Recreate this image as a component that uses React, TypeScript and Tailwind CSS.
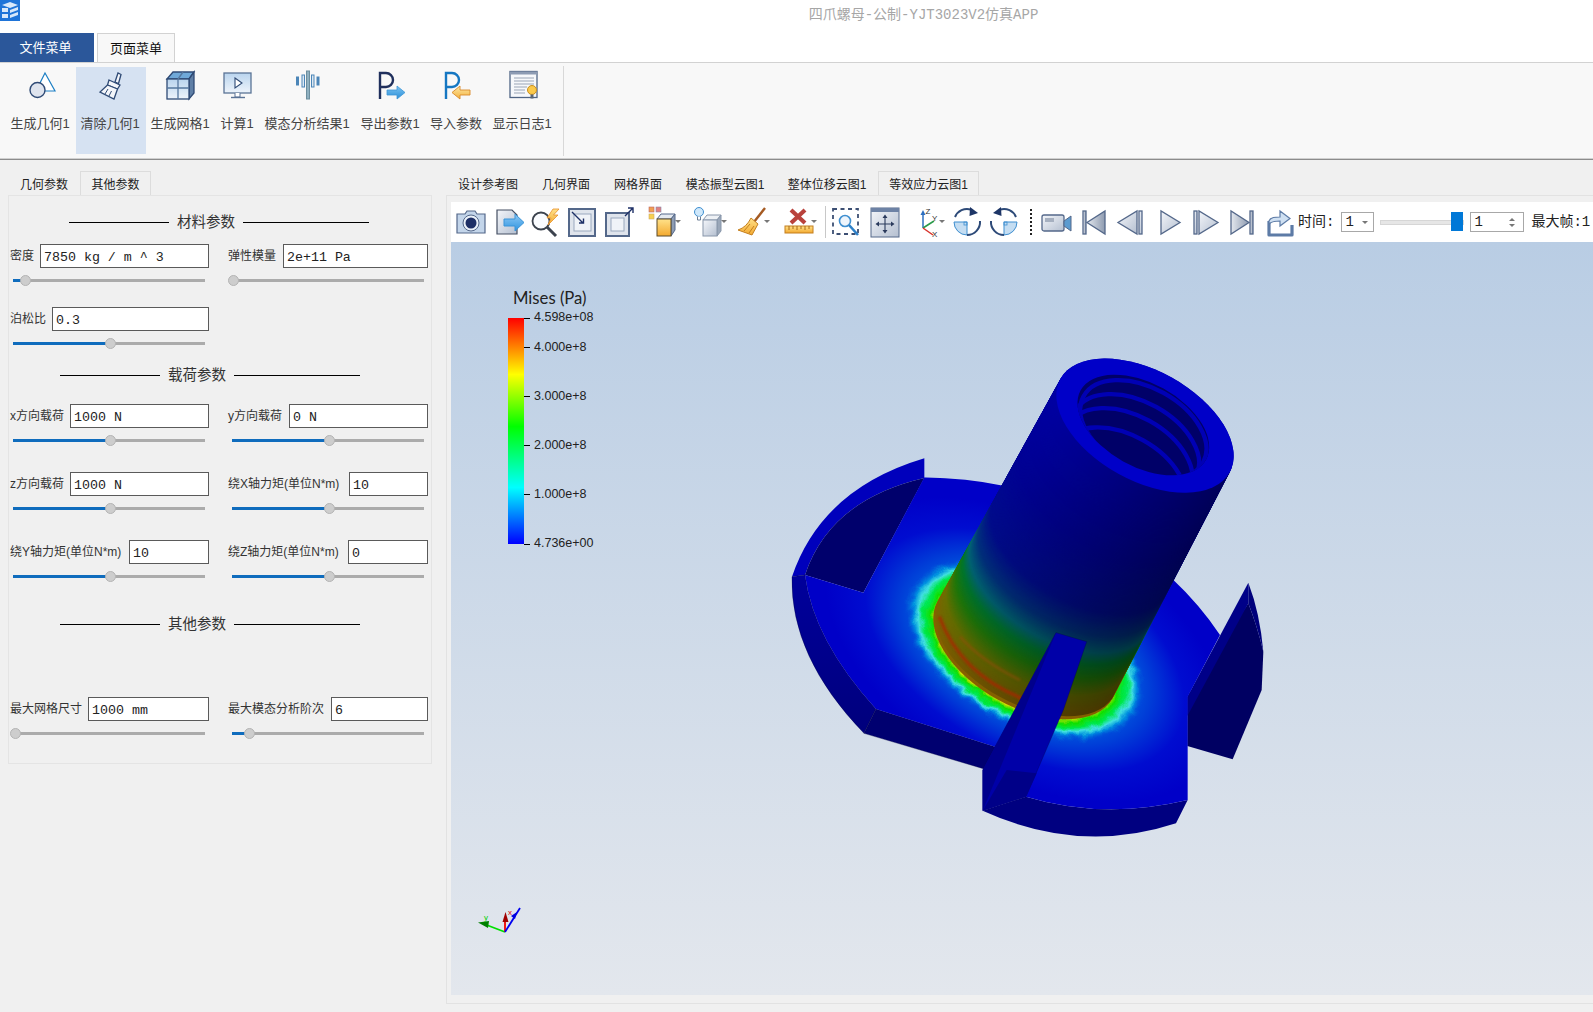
import React from 'react';

const ribbonItems = [
  { label: '生成几何1', w: 'w-[70px]', icon: 'shape' },
  { label: '清除几何1', w: 'w-[70px]', icon: 'brush', active: true },
  { label: '生成网格1', w: 'w-[70px]', icon: 'mesh' },
  { label: '计算1', w: 'w-[44px]', icon: 'monitor' },
  { label: '模态分析结果1', w: 'w-[96px]', icon: 'bars' },
  { label: '导出参数1', w: 'w-[70px]', icon: 'pout' },
  { label: '导入参数', w: 'w-[62px]', icon: 'pin' },
  { label: '显示日志1', w: 'w-[70px]', icon: 'log' },
];

const RibbonIcon = ({ name }: { name: string }) => {
  const navy = '#2f4a75';
  return (
    <svg width="36" height="32" viewBox="0 0 36 32" fill="none">
      <defs>
        <linearGradient id="rb" x1="0" y1="0" x2="0" y2="1">
          <stop offset="0" stopColor="#b9d4ee" />
          <stop offset="1" stopColor="#eef4fb" />
        </linearGradient>
        <linearGradient id="arrowBlue" x1="0" y1="0" x2="0" y2="1">
          <stop offset="0" stopColor="#7cc4f2" />
          <stop offset="1" stopColor="#2b8fd8" />
        </linearGradient>
        <linearGradient id="arrowOrange" x1="0" y1="0" x2="0" y2="1">
          <stop offset="0" stopColor="#fde8a8" />
          <stop offset="1" stopColor="#f3b13c" />
        </linearGradient>
      </defs>
      {name === 'shape' && (
        <>
          <path d="M22 3 L32 21 L13 21 Z" stroke="#1d7fc4" strokeWidth="1.2" fill="#fff" />
          <circle cx="14.5" cy="20" r="7.5" fill="#dfe4ee" stroke={navy} strokeWidth="1.4" />
        </>
      )}
      {name === 'brush' && (
        <g stroke={navy} strokeWidth="1.3" fill="#f4f6fa">
          <path d="M22 12 L25 3 L28 4.5 L25.5 13.5 Z" />
          <path d="M16 10 L27 15 L24.5 19 L14.5 15 Z" />
          <path d="M14.5 15 L24.5 19 L21 29 L7 22 Z" />
          <path d="M12 24 L15 19 M16 26 L18.5 21" strokeWidth="1" />
        </g>
      )}
      {name === 'mesh' && (
        <g stroke={navy} strokeWidth="1.3">
          <path d="M4 9 L10 2 L31 2 L26 9 Z" fill="#6fa8d8" />
          <path d="M26 9 L31 2 L31 23 L26 29 Z" fill="#5f7fa6" />
          <rect x="4" y="9" width="22" height="20" fill="url(#rb)" />
          <path d="M15 9 V29 M4 18 H26 M20 2 L15 9" stroke="#56789f" />
        </g>
      )}
      {name === 'monitor' && (
        <g>
          <rect x="4" y="3" width="27" height="20" fill="url(#rb)" stroke="#5a7396" strokeWidth="1.3" />
          <path d="M15 8 L22 13 L15 18 Z" fill="#fff" stroke={navy} strokeWidth="1.1" />
          <path d="M15 23 V27 H20 V23" fill="#fff" stroke="#5a7396" />
          <path d="M11 27.5 H25" stroke="#5a7396" strokeWidth="1.4" />
        </g>
      )}
      {name === 'bars' && (
        <g stroke="#4c86b8" strokeWidth="1">
          <rect x="16.5" y="1" width="3" height="28" fill="#8fb0c0" stroke="#6d8e9e" />
          <rect x="12" y="5" width="2.5" height="12" fill="#dce8f2" />
          <rect x="21.5" y="5" width="2.5" height="12" fill="#dce8f2" />
          <rect x="6.5" y="7" width="2" height="8" fill="#4c86b8" />
          <rect x="27" y="7" width="2" height="8" fill="#4c86b8" />
        </g>
      )}
      {name === 'pout' && (
        <g>
          <path d="M7 29 V3 H13 A7 7 0 0 1 13 17 H8" stroke="#1f2f5c" strokeWidth="2.4" />
          <path d="M14 20 H24 V16 L32 22.5 L24 29 V25 H14 Z" fill="url(#arrowBlue)" stroke="#3d96d6" strokeWidth=".8" />
        </g>
      )}
      {name === 'pin' && (
        <g>
          <path d="M7 29 V3 H13 A7 7 0 0 1 13 17 H8" stroke="#1577c2" strokeWidth="2.4" />
          <path d="M31 20 H21 V16 L13 22.5 L21 29 V25 H31 Z" fill="url(#arrowOrange)" stroke="#d98a2b" strokeWidth=".9" />
        </g>
      )}
      {name === 'log' && (
        <g>
          <rect x="5" y="1.5" width="27" height="26" fill="#f6f8fb" stroke="#4f6484" strokeWidth="1.3" />
          <rect x="5" y="1.5" width="27" height="3" fill="#8d9cb4" />
          <path d="M9 8 H29 M9 11 H29 M9 14 H29 M9 17 H22 M9 20 H20 M9 23 H20" stroke="#9aa5b6" />
          <circle cx="27" cy="20" r="4.5" fill="#fbc94a" stroke="#c98f1e" />
          <rect x="25.5" y="24.5" width="3" height="4" fill="#5c6675" />
        </g>
      )}
    </svg>
  );
};

const Ribbon = () => (
  <div className="flex h-[96px] items-start border-t border-[#d2d2d2] bg-[#f8f8f8] pl-[6px] pt-[4px]">
    {ribbonItems.map((item) => (
      <div
        key={item.label}
        className={`flex h-[87px] flex-col items-center pt-[3px] ${item.w} ${item.active ? 'bg-[#d6e2f2]' : ''}`}
      >
        <RibbonIcon name={item.icon} />
        <span className="mr-[2px] mt-[14px] whitespace-nowrap text-[13px] leading-[16px] text-[#444]">{item.label}</span>
      </div>
    ))}
    <div className="ml-[5px] mt-[-1px] h-[90px] w-px bg-[#d8d8d8]" />
  </div>
);

type Param = { label: string; value: string; w: string; pos: number };

const Slider = ({ pos, col }: { pos: number; col: number }) => (
  <div className={`relative flex h-6 w-[192px] items-center ${col === 0 ? 'ml-[3px]' : 'ml-[4px]'}`}>
    <div className="h-[3px] w-full bg-[#ababab]">
      <div className="h-full bg-[#0f6cbd]" style={{ width: pos }} />
    </div>
    <div
      className="absolute top-[6.5px] size-[11px] rounded-full border border-[#b4b4b4] bg-[#cdcdcd]"
      style={{ left: pos - 5.5 }}
    />
  </div>
);

const ParamCell = ({ p, col }: { p: Param; col: number }) => (
  <div>
    <div className="flex h-6 items-center justify-between">
      <span className="-mt-[1px] whitespace-nowrap text-[12px] text-[#333]">{p.label}</span>
      <div
        className={`flex h-6 items-center border border-[#5a5a5a] bg-white pl-[3px] pt-[3px] font-['Liberation_Mono','Noto_Sans_CJK_SC',monospace] text-[13.3px] text-[#222] ${p.w}`}
      >
        {p.value}
      </div>
    </div>
    <Slider pos={p.pos} col={col} />
  </div>
);

const ParamRow = ({ left, right, className }: { left: Param; right?: Param; className: string }) => (
  <div className={`grid grid-cols-[199px_200px] gap-x-[19px] ${className}`}>
    <ParamCell p={left} col={0} />
    {right && <ParamCell p={right} col={1} />}
  </div>
);

const Heading = ({ title, className }: { title: string; className: string }) => (
  <div className={`flex h-5 items-center gap-2 ${className}`}>
    <div className="h-px w-[100px] bg-black" />
    <span className="w-[58px] whitespace-nowrap text-[14.5px] leading-5 text-[#333]">{title}</span>
    <div className="h-px w-[126px] bg-black" />
  </div>
);

const LeftPanel = () => (
  <div className="flex w-[446px] shrink-0 flex-col pl-2 pt-[11px]">
    <div className="flex h-6 text-[12px] text-[#222]">
      <div className="flex w-[72px] items-center justify-center pt-[3px]">几何参数</div>
      <div className="flex w-[71px] items-center justify-center border border-b-0 border-[#dcdcdc] pt-[3px]">其他参数</div>
    </div>
    <div className="h-[569px] w-[424px] border border-[#e4e4e4] pl-px pt-4">
      <Heading title="材料参数" className="ml-[59px]" />
      <ParamRow
        className="mt-3"
        left={{ label: '密度', value: '7850 kg / m ^ 3', w: 'w-[169px]', pos: 12 }}
        right={{ label: '弹性模量', value: '2e+11 Pa', w: 'w-[145px]', pos: 1 }}
      />
      <ParamRow className="mt-[15px]" left={{ label: '泊松比', value: '0.3', w: 'w-[157px]', pos: 97 }} />
      <Heading title="载荷参数" className="ml-[50px] mt-[10px]" />
      <ParamRow
        className="mt-[19px]"
        left={{ label: 'x方向载荷', value: '1000 N', w: 'w-[139px]', pos: 97 }}
        right={{ label: 'y方向载荷', value: '0 N', w: 'w-[139px]', pos: 97 }}
      />
      <ParamRow
        className="mt-5"
        left={{ label: 'z方向载荷', value: '1000 N', w: 'w-[139px]', pos: 97 }}
        right={{ label: '绕X轴力矩(单位N*m)', value: '10', w: 'w-[79px]', pos: 97 }}
      />
      <ParamRow
        className="mt-5"
        left={{ label: '绕Y轴力矩(单位N*m)', value: '10', w: 'w-[80px]', pos: 97 }}
        right={{ label: '绕Z轴力矩(单位N*m)', value: '0', w: 'w-[80px]', pos: 97 }}
      />
      <Heading title="其他参数" className="ml-[50px] mt-[26px]" />
      <ParamRow
        className="mt-[63px]"
        left={{ label: '最大网格尺寸', value: '1000 mm', w: 'w-[121px]', pos: 2 }}
        right={{ label: '最大模态分析阶次', value: '6', w: 'w-[97px]', pos: 17 }}
      />
    </div>
  </div>
);

const Defs = () => (
  <svg width="0" height="0" className="absolute">
    <defs>
      <linearGradient id="tbBlue" x1="0" y1="0" x2="0" y2="1">
        <stop offset="0" stopColor="#8dc8f5" />
        <stop offset="1" stopColor="#2f95e0" />
      </linearGradient>
      <linearGradient id="tbGray" x1="0" y1="0" x2="1" y2="1">
        <stop offset="0" stopColor="#f4f6fa" />
        <stop offset="1" stopColor="#b4bfd0" />
      </linearGradient>
      <linearGradient id="tbDark" x1="0" y1="0" x2="1" y2="0">
        <stop offset="0" stopColor="#e4e8ee" />
        <stop offset="1" stopColor="#8e9bb0" />
      </linearGradient>
      <linearGradient id="tbOrange" x1="0" y1="0" x2="0" y2="1">
        <stop offset="0" stopColor="#ffe28a" />
        <stop offset="1" stopColor="#f3a92f" />
      </linearGradient>
    </defs>
  </svg>
);

const edge = '#54688a';

const ToolIcon = ({ name }: { name: string }) => (
  <svg width="32" height="32" viewBox="0 0 32 32" fill="none">
    {name === 'camera' && (
      <g>
        <path d="M2 8 H10 L12 5 H20 L22 8 H30 V27 H2 Z" fill="#c3d5ea" stroke={edge} strokeWidth="1.2" />
        <circle cx="16" cy="17" r="8" fill="#eaf1f9" stroke={edge} />
        <circle cx="16" cy="17" r="5.5" fill="#1d2f66" />
      </g>
    )}
    {name === 'export' && (
      <g>
        <path d="M4 4 H19 L24 9 V28 H4 Z" fill="url(#tbGray)" stroke="#444f63" strokeWidth="1.2" />
        <path d="M11 13 H22 V8 L31 16.5 L22 25 V20 H11 Z" fill="url(#tbBlue)" stroke="#3a94d8" />
      </g>
    )}
    {name === 'spark' && (
      <g>
        <circle cx="12" cy="15" r="8.5" fill="#fafcff" stroke="#3c434e" strokeWidth="1.8" />
        <path d="M18 21 L27 30" stroke="#3c434e" strokeWidth="3" />
        <path d="M24 3 L18 12 L22 12 L19 19 L29 9 L24.5 9 L30 3 Z" fill="url(#tbOrange)" stroke="#e8912a" strokeWidth=".8" />
      </g>
    )}
    {name === 'boxin' && (
      <g>
        <rect x="3" y="3" width="26" height="27" fill="#dfe4ec" stroke={edge} strokeWidth="2" />
        <rect x="8" y="8" width="17" height="17" fill="#f0f3f8" stroke="#9aa8bd" />
        <path d="M6 6 L17 17 M13 17 H17.5 V12.5" stroke="#1d2f66" strokeWidth="1.4" />
      </g>
    )}
    {name === 'boxout' && (
      <g>
        <rect x="3" y="7" width="23" height="23" fill="#dfe4ec" stroke={edge} strokeWidth="2" />
        <rect x="8" y="12" width="13" height="13" fill="#f0f3f8" stroke="#9aa8bd" />
        <path d="M22 10 L30 2 M25 2 H30 V7" stroke="#1d2f66" strokeWidth="1.4" />
      </g>
    )}
    {name === 'cube' && (
      <g>
        <rect x="2" y="1" width="5" height="5" fill="#f0a050" stroke="#b66" strokeWidth=".6" />
        <rect x="9" y="1" width="5" height="5" fill="#e08080" stroke="#88a" strokeWidth=".6" />
        <rect x="2" y="8" width="5" height="5" fill="#f7d050" stroke="#ca6" strokeWidth=".6" />
        <path d="M10 13 L14 8 H28 L24 13 Z" fill="#e4e9f0" stroke={edge} />
        <path d="M24 13 L28 8 V24 L24 30 Z" fill="#8d9cb3" stroke={edge} />
        <rect x="10" y="13" width="14" height="17" fill="url(#tbOrange)" stroke="#5a4a2a" />
      </g>
    )}
    {name === 'bulb' && (
      <g>
        <circle cx="6" cy="6" r="4.5" fill="#cfe8fb" stroke="#3f8fd0" />
        <path d="M4.5 10.5 V14 H7.5 V10.5" fill="#fff" stroke="#6a7c94" />
        <path d="M10 14 L14 9 H28 L24 14 Z" fill="#eef1f5" stroke="#8896aa" />
        <path d="M24 14 L28 9 V25 L24 30 Z" fill="#9aa7b9" stroke="#8896aa" />
        <rect x="10" y="14" width="14" height="16" fill="url(#tbGray)" stroke="#8896aa" />
      </g>
    )}
    {name === 'broom' && (
      <g>
        <path d="M29 2 L18 16" stroke="#a55a22" strokeWidth="2.4" />
        <path d="M15 12 L22 18 L16 29 L2 24 C8 22 12 18 15 12 Z" fill="url(#tbOrange)" stroke="#c47f1f" />
        <path d="M14 18 L8 25 M18 20 L13 27" stroke="#c47f1f" />
      </g>
    )}
    {name === 'ruler' && (
      <g>
        <path d="M8 4 L22 17 M22 4 L8 17" stroke="#b9423c" strokeWidth="4.2" />
        <rect x="2" y="20" width="28" height="7" fill="url(#tbOrange)" stroke="#c47f1f" />
        <path d="M6 20 V24 M10 20 V23 M14 20 V24 M18 20 V23 M22 20 V24 M26 20 V23" stroke="#a86b18" />
      </g>
    )}
    {name === 'zoombox' && (
      <g>
        <rect x="3" y="3" width="25" height="25" stroke="#3c4f73" strokeWidth="1.8" strokeDasharray="4 3.5" />
        <circle cx="15" cy="15" r="5.5" fill="#eef5fc" stroke="#3f8fd0" strokeWidth="1.6" />
        <path d="M19 19 L28 29" stroke="#2d80c8" strokeWidth="2.6" />
      </g>
    )}
    {name === 'fit' && (
      <g>
        <rect x="3" y="2" width="28" height="29" fill="url(#tbGray)" stroke={edge} />
        <rect x="3" y="2" width="28" height="4" fill="#6d82a5" />
        <path d="M17 10 V26 M9 18 H25" stroke="#2a3a5c" strokeWidth="1.1" />
        <path d="M17 8.5 L14.5 12 H19.5 Z M17 27.5 L14.5 24 H19.5 Z M7.5 18 L11 15.5 V20.5 Z M26.5 18 L23 15.5 V20.5 Z" fill="#2a3a5c" />
      </g>
    )}
    {name === 'axes' && (
      <g>
        <path d="M12 22 V6" stroke="#2d6fc0" strokeWidth="1.5" />
        <path d="M12 4 L9.5 9 H14.5 Z" fill="#2d6fc0" />
        <path d="M12 22 L23 15" stroke="#2a9a4a" strokeWidth="1.5" />
        <path d="M12 22 L22 29" stroke="#d8332c" strokeWidth="1.5" />
        <text x="14.5" y="8" fontSize="8" fill="#333" fontFamily="Liberation Sans">Z</text>
        <text x="21" y="15" fontSize="8" fill="#333" fontFamily="Liberation Sans">Y</text>
        <text x="21" y="31" fontSize="8" fill="#333" fontFamily="Liberation Sans">X</text>
      </g>
    )}
    {name === 'rotcw' && (
      <g>
        <path d="M3 16 H16 V29 A13 13 0 0 1 3 16 Z" fill="#c4ddf2" stroke="#3f8fd0" />
        <path d="M4 11 A13 13 0 0 1 20 3.6 M29 15 A13 13 0 0 1 16 29" stroke="#2d4a78" strokeWidth="2" />
        <path d="M19 1 L27 7 L18.5 10 Z" fill="#1d3566" />
        <rect x="13" y="16" width="3" height="3" stroke="#3f8fd0" strokeWidth=".8" />
      </g>
    )}
    {name === 'rotccw' && (
      <g>
        <path d="M29 16 H16 V29 A13 13 0 0 0 29 16 Z" fill="#c4ddf2" stroke="#3f8fd0" />
        <path d="M28 11 A13 13 0 0 0 12 3.6 M3 15 A13 13 0 0 0 16 29" stroke="#2d4a78" strokeWidth="2" />
        <path d="M13 1 L5 7 L13.5 10 Z" fill="#1d3566" />
        <rect x="16" y="16" width="3" height="3" stroke="#3f8fd0" strokeWidth=".8" />
      </g>
    )}
    {name === 'video' && (
      <g>
        <rect x="1" y="9" width="22" height="16" rx="2" fill="url(#tbGray)" stroke={edge} strokeWidth="1.3" />
        <rect x="4" y="12" width="9" height="4" fill="#a6b0c0" />
        <path d="M23 15 L30 10 V25 L23 20 Z" fill="#5c9bcf" stroke={edge} />
      </g>
    )}
    {name === 'first' && (
      <g fill="url(#tbDark)" stroke={edge} strokeWidth="1.3">
        <rect x="5" y="5" width="3" height="23" />
        <path d="M27 5 V28 L9 16.5 Z" />
      </g>
    )}
    {name === 'prev' && (
      <g fill="url(#tbGray)" stroke={edge} strokeWidth="1.3">
        <path d="M22 5 V28 L3 16.5 Z" />
        <rect x="24" y="5" width="3" height="23" />
      </g>
    )}
    {name === 'play' && <path d="M8 5 V28 L27 16.5 Z" fill="url(#tbGray)" stroke={edge} strokeWidth="1.3" />}
    {name === 'next' && (
      <g fill="url(#tbGray)" stroke={edge} strokeWidth="1.3">
        <rect x="5" y="5" width="3" height="23" />
        <path d="M10 5 V28 L29 16.5 Z" />
      </g>
    )}
    {name === 'last' && (
      <g fill="url(#tbDark)" stroke={edge} strokeWidth="1.3">
        <path d="M5 5 V28 L23 16.5 Z" />
        <rect x="24" y="5" width="3" height="23" />
      </g>
    )}
    {name === 'share' && (
      <g>
        <path d="M6 15 V29 H29 V19" stroke="#5d7ba6" strokeWidth="3.2" strokeLinejoin="round" />
        <path d="M6 15 C8 11 12 11 17 11 V5 L27 12.5 L17 20 V15 C13 15 9 15 6 18 Z" fill="#cfe0f2" stroke="#5d7ba6" strokeWidth="1.2" />
      </g>
    )}
  </svg>
);

const tools = [
  { n: 'camera', m: 'ml-[4px]' },
  { n: 'export', m: 'ml-[6px]' },
  { n: 'spark', m: 'ml-[4px]' },
  { n: 'boxin', m: 'ml-[5px]' },
  { n: 'boxout', m: 'ml-[5px]' },
  { n: 'cube', m: 'ml-[12px]', caret: true },
  { n: 'bulb', m: 'ml-[14px]', caret: true },
  { n: 'broom', m: 'ml-[11px]', caret: true },
  { n: 'ruler', m: 'ml-[15px]', caret: true },
  { sep: true, m: 'ml-[10px]' },
  { n: 'zoombox', m: 'ml-[4px]' },
  { n: 'fit', m: 'ml-[6px]' },
  { n: 'axes', m: 'ml-[11px]', caret: true },
  { n: 'rotcw', m: 'ml-[8px]' },
  { n: 'rotccw', m: 'ml-[5px]' },
  { dots: true, m: 'ml-[10px]' },
  { n: 'video', m: 'ml-[9px]' },
  { n: 'first', m: 'ml-[5px]' },
  { n: 'prev', m: 'ml-[5px]' },
  { n: 'play', m: 'ml-[6px]' },
  { n: 'next', m: 'ml-[4px]' },
  { n: 'last', m: 'ml-[5px]' },
  { n: 'share', m: 'ml-[5px]' },
];

const Toolbar = () => (
  <div className="flex h-10 items-center overflow-hidden bg-white font-['Liberation_Mono','Noto_Sans_CJK_SC',monospace]">
    {tools.map((t, i) => {
      if (t.sep) return <div key={i} className={`h-[32px] w-px bg-[#c8c8c8] ${t.m}`} />;
      if (t.dots) return <div key={i} className={`h-[26px] w-px border-l-2 border-dotted border-[#222] ${t.m}`} />;
      return (
        <div key={i} className={`relative size-8 shrink-0 ${t.m}`}>
          <ToolIcon name={t.n as string} />
          {t.caret && (
            <div className="absolute left-[28px] top-[14px] size-0 border-x-[3px] border-t-[3px] border-x-transparent border-t-[#777]" />
          )}
        </div>
      );
    })}
    <span className="ml-[3px] whitespace-nowrap text-[14px] text-[#222]">时间:</span>
    <div className="ml-[7px] flex h-5 w-[33px] items-center justify-between border border-[#a8a8a8] px-[3px] text-[14px] text-[#222]">
      1<div className="mr-[2px] size-0 border-x-[3px] border-t-[3px] border-x-transparent border-t-[#777]" />
    </div>
    <div className="relative ml-[6px] h-[5px] w-[84px] border border-[#d6d6d6] bg-[#e6e6e6]">
      <div className="absolute left-[70px] top-[-9px] h-[19px] w-3 bg-[#0078d7]" />
    </div>
    <div className="ml-[6px] flex h-5 w-[54px] items-center justify-between border border-[#a8a8a8] px-[3px] text-[14px] text-[#222]">
      1
      <div className="flex flex-col gap-[3px] pr-[5px]">
        <div className="size-0 border-x-[3px] border-b-[3px] border-x-transparent border-b-[#777]" />
        <div className="size-0 border-x-[3px] border-t-[3px] border-x-transparent border-t-[#777]" />
      </div>
    </div>
    <span className="ml-[7px] whitespace-nowrap text-[14px] text-[#222]">最大帧:1</span>
  </div>
);

const ticks = [
  { label: '4.000e+8', v: 4e8 },
  { label: '3.000e+8', v: 3e8 },
  { label: '2.000e+8', v: 2e8 },
  { label: '1.000e+8', v: 1e8 },
];
const MAX = 4.598e8;
const BAR_H = 226;

const Legend = () => (
  <div className="absolute left-[57px] top-[48px] h-[270px] w-[100px] text-[#222]">
    <div className="-mt-px whitespace-nowrap pl-[5px] font-['Lato',sans-serif] text-[16.7px] leading-[18px]">Mises (Pa)</div>
    <div className="absolute left-0 top-[28px] h-[226px] w-4 bg-[linear-gradient(to_bottom,#ff0000,#ffff00_25%,#00ff00_48%,#00ffff_75%,#0000ff)]" />
    {[{ label: '4.598e+08', v: MAX }, ...ticks, { label: '4.736e+00', v: 0 }].map((t) => (
      <div
        key={t.label}
        className="absolute left-4 flex h-4 items-center"
        style={{ top: 28 + (1 - t.v / MAX) * BAR_H - 8 }}
      >
        <div className="h-px w-[6px] bg-black" />
        <span className={`ml-1 whitespace-nowrap font-['Liberation_Sans',sans-serif] text-[12.5px] ${t.label.length > 8 ? '-mt-[2px]' : ''}`}>
          {t.label}
        </span>
      </div>
    ))}
  </div>
);

const colorStops: [number, number[]][] = [
  [0, [135, 95, 0]],
  [0.03, [125, 100, 0]],
  [0.1, [105, 112, 0]],
  [0.18, [30, 120, 10]],
  [0.24, [0, 118, 45]],
  [0.29, [0, 100, 115]],
  [0.36, [0, 50, 125]],
  [0.46, [0, 12, 140]],
  [0.7, [0, 2, 150]],
  [1, [0, 0, 165]],
];

const heat = (t: number) => {
  for (let i = 1; i < colorStops.length; i++) {
    const [b, cb] = colorStops[i];
    const [a, ca] = colorStops[i - 1];
    if (t <= b) {
      const k = (t - a) / (b - a);
      return `rgb(${ca.map((c, j) => Math.round(c + (cb[j] - c) * k)).join(',')})`;
    }
  }
  return 'rgb(0,0,165)';
};

const steps = Array.from({ length: 200 }, (_, i) => i / 199);

const Model = () => (
  <svg className="absolute left-[329px] top-[98px]" width="500" height="510" viewBox="0 0 1500 1530" fill="none">
    <defs>
      <radialGradient id="base" gradientUnits="userSpaceOnUse" cx="0" cy="0" r="1" gradientTransform="translate(735 930) rotate(29) scale(650 380)">
        <stop offset="0.5" stopColor="#0060e0" />
        <stop offset="0.62" stopColor="#0040d8" />
        <stop offset="0.8" stopColor="#000cd0" />
        <stop offset="1" stopColor="#0000c8" />
      </radialGradient>
      <radialGradient id="glow" gradientUnits="userSpaceOnUse" cx="0" cy="0" r="1" gradientTransform="translate(735 930) rotate(29) scale(650 380)">
        <stop offset="0.44" stopColor="#d0e000" />
        <stop offset="0.47" stopColor="#10e000" />
        <stop offset="0.51" stopColor="#00e850" />
        <stop offset="0.535" stopColor="#40e0e0" />
        <stop offset="0.56" stopColor="#0090e0" />
        <stop offset="0.6" stopColor="#0050d8" stopOpacity="0" />
      </radialGradient>
      <clipPath id="flange">
        <path d="M75 705 L250 758 L433 412 Q560 415 670 437 L1175 715 Q1260 795 1320 885 L1223 1070 L1223 1380 Q970 1440 738 1370 L645 1220 L288 1107 Q100 900 75 705 Z" />
      </clipPath>
      <linearGradient id="shade" gradientUnits="userSpaceOnUse" x1="475" y1="790" x2="995" y2="1070">
        <stop offset="0" stopColor="#000" stopOpacity="0" />
        <stop offset="0.5" stopColor="#000" stopOpacity="0.22" />
        <stop offset="1" stopColor="#000" stopOpacity="0.45" />
      </linearGradient>
      <linearGradient id="rim" x1="0" y1="0" x2="0" y2="1">
        <stop offset="0" stopColor="#00009c" />
        <stop offset="1" stopColor="#00007c" />
      </linearGradient>
      <clipPath id="hole">
        <ellipse cx="1090" cy="255" rx="215" ry="125" transform="rotate(29 1090 255)" />
      </clipPath>
      <filter id="wobble" x="0" y="0" width="100%" height="100%">
        <feTurbulence type="fractalNoise" baseFrequency="0.03" numOctaves="2" seed="4" />
        <feDisplacementMap in="SourceGraphic" scale="24" xChannelSelector="R" yChannelSelector="G" />
      </filter>
      <filter id="soft">
        <feGaussianBlur stdDeviation="3" />
      </filter>
    </defs>

    {/* back left prong */}
    <path d="M36 710 Q125 447 433 355 L433 414 Q149 480 75 705 Z" fill="#0000bc" />
    <path d="M75 705 Q149 480 433 414 L250 758 Z" fill="#00006c" />
    {/* rim */}
    <path d="M36 710 Q30 950 252 1180 L288 1107 Q100 900 75 705 Z" fill="url(#rim)" stroke="#000040" />
    <path d="M252 1180 L640 1295 L645 1220 L288 1107 Z" fill="#000070" stroke="#000040" />
    {/* front rim */}
    <path d="M608 1412 Q900 1545 1188 1450 L1223 1380 Q970 1440 738 1370 Z" fill="#000080" />
    {/* right prong */}
    <path d="M1222 1070 L1405 790 Q1432 860 1450 935 L1445 1050 L1358 1258 L1222 1218 Z" fill="#000062" />
    <path d="M1222 1070 L1405 728 L1405 790 L1222 1128 Z" fill="#000088" />
    <path d="M1405 728 Q1440 820 1450 935 Q1432 860 1405 790 Z" fill="#00007c" />

    {/* flange top with heat halo */}
    <g clipPath="url(#flange)">
      <rect x="0" y="300" width="1500" height="1200" fill="url(#base)" />
      <rect x="0" y="300" width="1500" height="1200" fill="url(#glow)" filter="url(#wobble)" />
    </g>

    {/* cylinder, stacked from the base up so bands follow the curve */}
    {steps.map((t) => (
      <ellipse
        key={t}
        cx={735 + 360 * t}
        cy={930 - 673 * t}
        rx={300 - 10 * t}
        ry={170 - 5 * t}
        transform={`rotate(29 ${735 + 360 * t} ${930 - 673 * t})`}
        fill={heat(t)}
      />
    ))}
    <path d="M841 116 L473 785 A300 170 29 0 0 997 1075 L1349 398 Z" fill="url(#shade)" />
    <path d="M478 830 Q540 1000 725 1075" stroke="#a82806" strokeWidth="10" opacity="0.75" filter="url(#soft)" />
    <path d="M540 890 Q600 960 720 1020" stroke="#a04808" strokeWidth="9" opacity="0.4" filter="url(#soft)" />

    {/* top face and thread */}
    <ellipse cx="1095" cy="257" rx="290" ry="165" transform="rotate(29 1095 257)" fill="#0000c8" />
    <ellipse cx="1090" cy="255" rx="215" ry="125" transform="rotate(29 1090 255)" fill="#000068" />
    <g clipPath="url(#hole)" stroke="#0000b4" strokeWidth="13">
      <ellipse cx="1090" cy="268" rx="205" ry="125" transform="rotate(29 1090 268)" />
      <ellipse cx="1068" cy="310" rx="205" ry="125" transform="rotate(29 1068 310)" />
      <ellipse cx="1048" cy="352" rx="205" ry="125" transform="rotate(29 1048 352)" />
      <ellipse cx="1028" cy="410" rx="205" ry="125" transform="rotate(29 1028 410)" />
    </g>

    {/* front prong */}
    <path d="M828 878 L920 905 L850 1110 L738 1370 L608 1412 L608 1290 L645 1220 Z" fill="#0000a8" stroke="#000050" />
    <path d="M828 878 L645 1220 L608 1290 L608 1412 Z" fill="#00008c" />
    <path d="M608 1412 L738 1370 L770 1300 L680 1290 Z" fill="#000088" />
  </svg>
);

const Triad = () => (
  <svg className="absolute left-[19px] top-[665px]" width="60" height="40" viewBox="0 0 60 40" fill="none">
    <path d="M35 25 L14 17" stroke="#00e000" strokeWidth="1.8" />
    <path d="M8 15.5 L19 14 L18 21 Z" fill="#008000" />
    <path d="M35 25 V12" stroke="#f00000" strokeWidth="1.8" />
    <path d="M35.5 5 L32.5 15 L38.5 15 Z" fill="#a00000" />
    <path d="M35 25 L50 1" stroke="#0000f0" strokeWidth="1.8" />
    <path d="M47 5 L41 9 L45 12 Z" fill="#0000e0" />
    <text x="38" y="8" fontSize="8" fill="#e00000" fontFamily="Liberation Sans">x</text>
    <text x="14" y="13" fontSize="8" fill="#00d000" fontFamily="Liberation Sans">y</text>
  </svg>
);

const tabs = [
  { t: '设计参考图', w: 'w-[84px]' },
  { t: '几何界面', w: 'w-[72px]' },
  { t: '网格界面', w: 'w-[72px]' },
  { t: '模态振型云图1', w: 'w-[102px]' },
  { t: '整体位移云图1', w: 'w-[102px]' },
  { t: '等效应力云图1', w: 'w-[101px]', active: true },
];

const RightPanel = () => (
  <div className="flex min-w-0 flex-1 flex-col pb-2 pt-[11px]">
    <div className="flex h-6 text-[12px] text-[#222]">
      {tabs.map((t) => (
        <div
          key={t.t}
          className={`flex items-center justify-center whitespace-nowrap pt-[3px] ${t.w} ${t.active ? 'border border-b-0 border-[#dcdcdc]' : ''}`}
        >
          {t.t}
        </div>
      ))}
    </div>
    <div className="flex flex-1 flex-col border-b border-l border-t border-[#e2e2e2] pb-[8px] pl-1 pt-[6px]">
      <Toolbar />
      <div className="relative flex-1 overflow-hidden bg-[linear-gradient(to_bottom,#b9cde4,#e3e7ed)]">
        <Legend />
        <Model />
        <Triad />
      </div>
    </div>
  </div>
);

const AppLogo = () => (
  <svg width="20" height="21" viewBox="0 0 20 21" fill="none">
    <rect width="20" height="21" fill="#1f74d8" />
    <path d="M2 5 L10 2 L18 5 L10 8 Z M2 8 H8 V12 H2 Z M2 14 H8 V18 H2 Z M10 10 L18 7 V10 L10 13 Z M10 15 L18 12 V15 L10 18 Z" fill="#d8e8fa" />
  </svg>
);

export default function App() {
  return (
    <div className="flex h-screen w-screen flex-col overflow-hidden bg-[#f0f0f0] font-['Liberation_Sans','Noto_Sans_CJK_SC',sans-serif]">
      <Defs />
      {/* title bar */}
      <div className="relative flex h-[33px] items-start bg-white">
        <AppLogo />
        <div className="flex h-[31px] flex-1 items-center justify-center pl-[234px] font-['Liberation_Mono','Noto_Sans_CJK_SC',monospace] text-[14px] text-[#a6a6a6]">
          四爪螺母-公制-YJT3023V2仿真APP
        </div>
      </div>
      {/* menu tabs */}
      <div className="flex h-[29px] items-end bg-white text-[13px]">
        <div className="flex h-[29px] w-[94px] items-center justify-center bg-[#2b579a] pr-[3px] text-white">文件菜单</div>
        <div className="-mb-px ml-[3px] flex h-[30px] w-[78px] items-center justify-center border border-b-0 border-[#d2d2d2] bg-[#f8f8f8] text-[#111]">
          页面菜单
        </div>
      </div>
      <Ribbon />
      <div className="h-[2px] border-t border-b border-t-[#d0d0d0] border-b-[#8c8c8c]" />
      <div className="flex min-h-0 flex-1">
        <LeftPanel />
        <RightPanel />
      </div>
    </div>
  );
}
